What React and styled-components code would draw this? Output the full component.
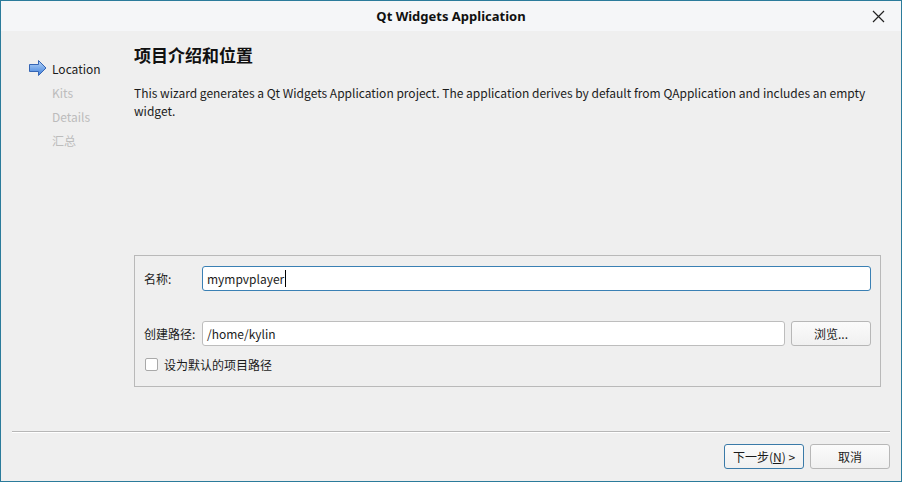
import React from 'react';
import styled, { createGlobalStyle } from 'styled-components';

const GlobalStyle = createGlobalStyle`
  html, body {
    margin: 0;
    padding: 0;
    background: #efefef;
  }
  * {
    box-sizing: border-box;
  }
`;

const Window = styled.div`
  width: 902px;
  height: 482px;
  display: flex;
  flex-direction: column;
  border: 1px solid #2b7b9b;
  background: #efefef;
  font-family: "Noto Sans CJK SC", "Noto Sans", sans-serif;
  font-size: 12px;
  color: #1b1b1b;
  overflow: hidden;
`;

const TitleBar = styled.div`
  position: relative;
  height: 30px;
  flex: none;
  display: flex;
  align-items: center;
  justify-content: center;
  background: #f5f6f8;
  font-family: "Noto Sans", sans-serif;
  font-weight: 700;
  font-size: 13px;
  color: #101010;
`;

const CloseButton = styled.div`
  position: absolute;
  right: 16px;
  top: 9px;
  width: 13px;
  height: 13px;
  display: flex;
`;

const Body = styled.div`
  flex: 1;
  display: flex;
  flex-direction: column;
  padding: 0 11px 12px 11px;
  min-height: 0;
`;

const Main = styled.div`
  flex: 1;
  display: flex;
  min-height: 0;
`;

const Sidebar = styled.div`
  width: 122px;
  flex: none;
  padding: 25px 0 0 17px;
  display: flex;
  flex-direction: column;
`;

const StepItem = styled.div`
  height: 24px;
  display: flex;
  align-items: center;
  padding-left: ${(p) => (p.current ? '0' : '23px')};
  color: ${(p) => (p.current ? '#1b1b1b' : '#bcbcbc')};
  gap: 5px;
`;

const Content = styled.div`
  flex: 1;
  display: flex;
  flex-direction: column;
  padding: 12px 9px 0 0;
`;

const Heading = styled.div`
  font-size: 17px;
  font-weight: 700;
  line-height: 24px;
  color: #111;
`;

const Description = styled.div`
  margin-top: 17px;
  line-height: 18px;
  padding-right: 8px;
`;

const GroupBox = styled.div`
  margin-top: auto;
  margin-bottom: 44px;
  border: 1px solid #b9b9b9;
  height: 132px;
  padding: 10px 9px 0 9px;
  display: flex;
  flex-direction: column;
`;

const FieldRow = styled.div`
  display: flex;
  align-items: center;
  gap: 6px;
  margin-top: ${(p) => p.offset || 0}px;
`;

const Label = styled.div`
  width: 58px;
  flex: none;
  margin-right: -6px;
`;

const Field = styled.div`
  flex: 1;
  height: 25px;
  display: flex;
  align-items: center;
  padding: 0 4px;
  background: #fff;
  border: 1px solid ${(p) => (p.focused ? '#3a80b4' : '#bdbdbd')};
  border-radius: 3px;
  white-space: nowrap;
`;

const Caret = styled.span`
  display: inline-block;
  width: 1px;
  height: 17px;
  margin-left: 1px;
  background: #000;
`;

const Button = styled.div`
  width: 80px;
  height: 25px;
  flex: none;
  display: flex;
  align-items: center;
  justify-content: center;
  border: 1px solid ${(p) => (p.primary ? '#3a7aa8' : '#b7b7b7')};
  border-radius: 3px;
  background: linear-gradient(#fbfbfb, #f0f0f0);
  color: #1b1b1b;
`;

const CheckRow = styled.div`
  display: flex;
  align-items: center;
  gap: 6px;
  margin-top: 10px;
  padding-left: 1px;
`;

const CheckBox = styled.div`
  width: 13px;
  height: 13px;
  background: #fff;
  border: 1px solid #a9a9a9;
  border-radius: 2px;
`;

const Separator = styled.div`
  height: 2px;
  flex: none;
  border-top: 1px solid #b7b7b7;
  border-bottom: 1px solid #ffffff;
`;

const ButtonRow = styled.div`
  display: flex;
  justify-content: flex-end;
  gap: 6px;
  margin-top: 11px;
`;

const Mnemonic = styled.span`
  text-decoration: underline;
`;

const ArrowIcon = () => (
  <svg width="18" height="16" viewBox="0 0 18 16">
    <defs>
      <linearGradient id="arrowFill" x1="0" y1="0" x2="0" y2="1">
        <stop offset="0" stopColor="#b9d6f7" />
        <stop offset="1" stopColor="#3d7fdc" />
      </linearGradient>
    </defs>
    <polygon
      points="0.5,4.5 9.5,4.5 9.5,0.5 17,8 9.5,15.5 9.5,11.5 0.5,11.5"
      fill="url(#arrowFill)"
      stroke="#3565b4"
      strokeWidth="1"
      strokeLinejoin="round"
    />
  </svg>
);

const CloseIcon = () => (
  <svg width="13" height="13" viewBox="0 0 13 13">
    <path d="M1 1 L12 12 M12 1 L1 12" stroke="#222" strokeWidth="1.2" />
  </svg>
);

const steps = ['Kits', 'Details', '汇总'];

const App = () => (
  <>
    <GlobalStyle />
    <Window>
      <TitleBar>
        Qt Widgets Application
        <CloseButton>
          <CloseIcon />
        </CloseButton>
      </TitleBar>
      <Body>
        <Main>
          <Sidebar>
            <StepItem current>
              <ArrowIcon />
              Location
            </StepItem>
            {steps.map((s) => (
              <StepItem key={s}>{s}</StepItem>
            ))}
          </Sidebar>
          <Content>
            <Heading>项目介绍和位置</Heading>
            <Description>
              This wizard generates a Qt Widgets Application project. The application derives by default from QApplication and includes an empty widget.
            </Description>
            <GroupBox>
              <FieldRow>
                <Label>名称:</Label>
                <Field focused>
                  mympvplayer
                  <Caret />
                </Field>
              </FieldRow>
              <FieldRow offset={30}>
                <Label>创建路径:</Label>
                <Field>/home/kylin</Field>
                <Button>浏览...</Button>
              </FieldRow>
              <CheckRow>
                <CheckBox />
                设为默认的项目路径
              </CheckRow>
            </GroupBox>
          </Content>
        </Main>
        <Separator />
        <ButtonRow>
          <Button primary>
            下一步(<Mnemonic>N</Mnemonic>) &gt;
          </Button>
          <Button>取消</Button>
        </ButtonRow>
      </Body>
    </Window>
  </>
);

export default App;
